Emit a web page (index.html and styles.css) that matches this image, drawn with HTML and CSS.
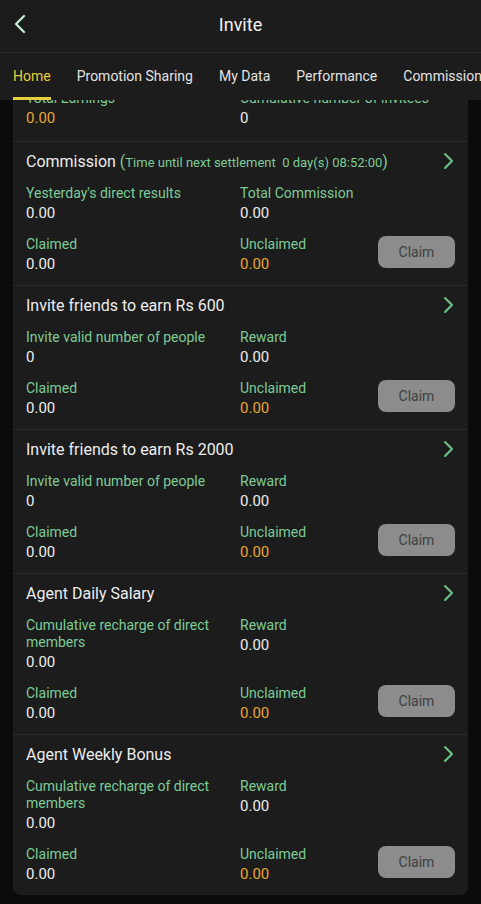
FILE: index.html
```html
<!DOCTYPE html>
<html>
<head>
<meta charset="utf-8">
<link rel="stylesheet" href="styles.css">
</head>
<body>
<div class="app">
  <header class="topbar">
    <svg class="back" width="14" height="20" viewBox="0 0 14 20"><path d="M11 2 L3 10 L11 18" fill="none" stroke="#c9f1d9" stroke-width="2.2" stroke-linecap="round" stroke-linejoin="round"/></svg>
    <h1 class="title">Invite</h1>
  </header>
  <nav class="tabs">
    <span class="tab active">Home</span>
    <span class="tab">Promotion Sharing</span>
    <span class="tab">My Data</span>
    <span class="tab">Performance</span>
    <span class="tab">Commission</span>
  </nav>
  <main class="content">
    <div class="card">
      <section class="sec sec-top">
        <div class="grid">
          <div class="cell"><div class="lbl nowrap">Total Earnings</div><div class="val orange">0.00</div></div>
          <div class="cell"><div class="lbl nowrap">Cumulative number of invitees</div><div class="val">0</div></div>
        </div>
      </section>

      <section class="sec">
        <div class="head"><span class="h">Commission <span class="paren">(</span><span class="note">Time until next settlement&nbsp; 0 day(s) 08:52:00</span><span class="paren">)</span></span>
          <svg class="chev" width="12" height="18" viewBox="0 0 12 18"><path d="M3 2 L10 9 L3 16" fill="none" stroke="#6cc68b" stroke-width="2" stroke-linecap="round" stroke-linejoin="round"/></svg></div>
        <div class="grid">
          <div class="cell"><div class="lbl">Yesterday's direct results</div><div class="val">0.00</div></div>
          <div class="cell"><div class="lbl">Total Commission</div><div class="val">0.00</div></div>
          <div class="cell"><div class="lbl">Claimed</div><div class="val">0.00</div></div>
          <div class="cell"><div class="lbl">Unclaimed</div><div class="val orange">0.00</div></div>
          <button class="claim">Claim</button>
        </div>
      </section>

      <section class="sec">
        <div class="head"><span class="h">Invite friends to earn Rs 600</span>
          <svg class="chev" width="12" height="18" viewBox="0 0 12 18"><path d="M3 2 L10 9 L3 16" fill="none" stroke="#6cc68b" stroke-width="2" stroke-linecap="round" stroke-linejoin="round"/></svg></div>
        <div class="grid">
          <div class="cell"><div class="lbl">Invite valid number of people</div><div class="val">0</div></div>
          <div class="cell"><div class="lbl">Reward</div><div class="val">0.00</div></div>
          <div class="cell"><div class="lbl">Claimed</div><div class="val">0.00</div></div>
          <div class="cell"><div class="lbl">Unclaimed</div><div class="val orange">0.00</div></div>
          <button class="claim">Claim</button>
        </div>
      </section>

      <section class="sec">
        <div class="head"><span class="h">Invite friends to earn Rs 2000</span>
          <svg class="chev" width="12" height="18" viewBox="0 0 12 18"><path d="M3 2 L10 9 L3 16" fill="none" stroke="#6cc68b" stroke-width="2" stroke-linecap="round" stroke-linejoin="round"/></svg></div>
        <div class="grid">
          <div class="cell"><div class="lbl">Invite valid number of people</div><div class="val">0</div></div>
          <div class="cell"><div class="lbl">Reward</div><div class="val">0.00</div></div>
          <div class="cell"><div class="lbl">Claimed</div><div class="val">0.00</div></div>
          <div class="cell"><div class="lbl">Unclaimed</div><div class="val orange">0.00</div></div>
          <button class="claim">Claim</button>
        </div>
      </section>

      <section class="sec">
        <div class="head"><span class="h">Agent Daily Salary</span>
          <svg class="chev" width="12" height="18" viewBox="0 0 12 18"><path d="M3 2 L10 9 L3 16" fill="none" stroke="#6cc68b" stroke-width="2" stroke-linecap="round" stroke-linejoin="round"/></svg></div>
        <div class="grid">
          <div class="cell"><div class="lbl">Cumulative recharge of direct members</div><div class="val">0.00</div></div>
          <div class="cell"><div class="lbl">Reward</div><div class="val">0.00</div></div>
          <div class="cell"><div class="lbl">Claimed</div><div class="val">0.00</div></div>
          <div class="cell"><div class="lbl">Unclaimed</div><div class="val orange">0.00</div></div>
          <button class="claim">Claim</button>
        </div>
      </section>

      <section class="sec">
        <div class="head"><span class="h">Agent Weekly Bonus</span>
          <svg class="chev" width="12" height="18" viewBox="0 0 12 18"><path d="M3 2 L10 9 L3 16" fill="none" stroke="#6cc68b" stroke-width="2" stroke-linecap="round" stroke-linejoin="round"/></svg></div>
        <div class="grid">
          <div class="cell"><div class="lbl">Cumulative recharge of direct members</div><div class="val">0.00</div></div>
          <div class="cell"><div class="lbl">Reward</div><div class="val">0.00</div></div>
          <div class="cell"><div class="lbl">Claimed</div><div class="val">0.00</div></div>
          <div class="cell"><div class="lbl">Unclaimed</div><div class="val orange">0.00</div></div>
          <button class="claim">Claim</button>
        </div>
      </section>
    </div>
  </main>
</div>
</body>
</html>
```

FILE: styles.css
```css
* { box-sizing: border-box; }
html, body { margin: 0; padding: 0; }
body {
  background: #0b0b0b;
  font-family: Roboto, "Noto Sans", Arial, sans-serif;
  color: #e6e6e6;
}
.app { width: 481px; height: 904px; overflow: hidden; display: flex; flex-direction: column; }
.topbar {
  height: 53px;
  padding-bottom: 4px;
  background: #1c1c1c;
  display: flex;
  align-items: center;
  justify-content: center;
  position: relative;
  border-bottom: 1px solid #2a2a2a;
  flex: none;
}
.back { position: absolute; left: 13px; top: 14px; }
.title { margin: 0; font-size: 18px; font-weight: 400; color: #f2f2f2; }
.tabs {
  height: 47px;
  background: #1c1c1c;
  display: flex;
  gap: 26px;
  padding-left: 13px;
  white-space: nowrap;
  flex: none;
  position: relative;
  z-index: 2;
}
.tab {
  font-size: 14px;
  color: #e2e2e2;
  line-height: 46px;
  height: 47px;
  border-bottom: 3px solid transparent;
}
.tab.active { color: #e6cf3c; border-bottom-color: #e6cf3c; }
.content { flex: 1; overflow: hidden; }
.card {
  margin: -18px 13px 0;
  background: #1c1c1c;
  border-radius: 8px;
}
.sec {
  padding: 8px 13px 9px;
  border-bottom: 1px solid #2b2b2b;
}
.sec:last-child { border-bottom: none; }
.sec-top { padding-top: 8px; padding-bottom: 11px; }
.head {
  display: flex;
  justify-content: space-between;
  align-items: center;
  height: 22px;
  margin-bottom: 13px;
}
.h { font-size: 16px; color: #ececec; white-space: nowrap; }
.paren { color: #7ccb97; }
.note { font-size: 13px; color: #7ccb97; }
.chev { margin-right: 1px; }
.grid {
  display: grid;
  grid-template-columns: 214px 1fr 77px;
  row-gap: 11px;
}
.grid > .cell:nth-child(1) { grid-column: 1; grid-row: 1; }
.grid > .cell:nth-child(2) { grid-column: 2; grid-row: 1; }
.grid > .cell:nth-child(3) { grid-column: 1; grid-row: 2; }
.grid > .cell:nth-child(4) { grid-column: 2; grid-row: 2; }
.lbl { font-size: 14px; line-height: 17px; color: #7ccb97; padding-right: 20px; }
.lbl.nowrap { white-space: nowrap; }
.val { font-size: 15px; line-height: 23px; color: #ededed; }
.val.orange { color: #e8a534; }
.claim {
  grid-column: 3;
  grid-row: 2;
  align-self: start;
  height: 32px;
  width: 77px;
  border: none;
  border-radius: 8px;
  background: #8c8c8c;
  color: #3f3f3f;
  font-family: Roboto, "Noto Sans", Arial, sans-serif;
  font-size: 14px;
  padding: 0;
}
```
